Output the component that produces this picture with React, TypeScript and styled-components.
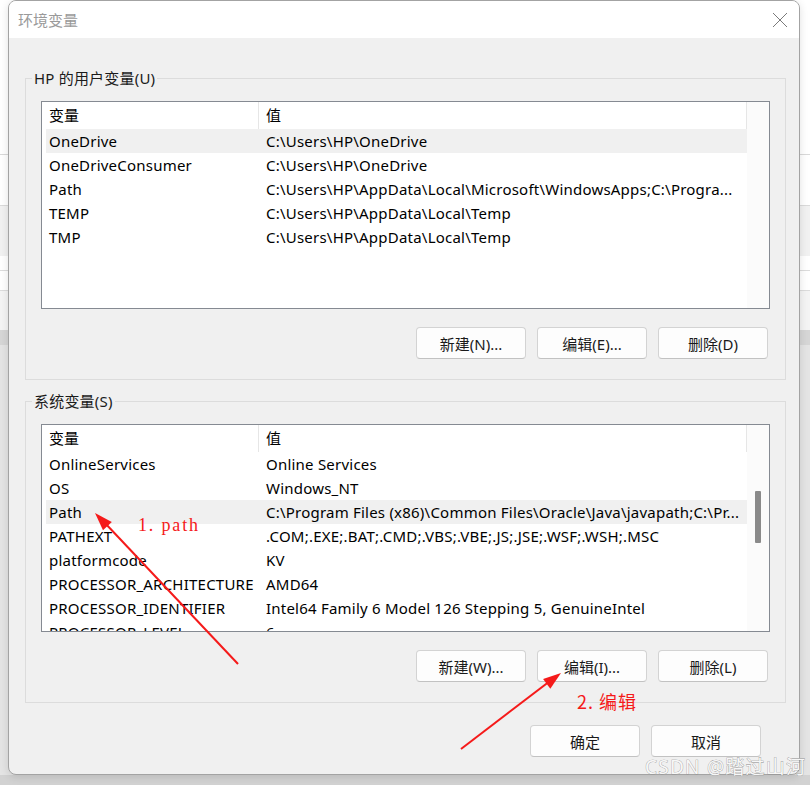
import React from "react";
import styled, { createGlobalStyle } from "styled-components";

type Row = { name: string; value: string; selected?: boolean };

const userVars: Row[] = [
  { name: "OneDrive", value: "C:\\Users\\HP\\OneDrive", selected: true },
  { name: "OneDriveConsumer", value: "C:\\Users\\HP\\OneDrive" },
  { name: "Path", value: "C:\\Users\\HP\\AppData\\Local\\Microsoft\\WindowsApps;C:\\Progra..." },
  { name: "TEMP", value: "C:\\Users\\HP\\AppData\\Local\\Temp" },
  { name: "TMP", value: "C:\\Users\\HP\\AppData\\Local\\Temp" },
];

const systemVars: Row[] = [
  { name: "OnlineServices", value: "Online Services" },
  { name: "OS", value: "Windows_NT" },
  { name: "Path", value: "C:\\Program Files (x86)\\Common Files\\Oracle\\Java\\javapath;C:\\Pr...", selected: true },
  { name: "PATHEXT", value: ".COM;.EXE;.BAT;.CMD;.VBS;.VBE;.JS;.JSE;.WSF;.WSH;.MSC" },
  { name: "platformcode", value: "KV" },
  { name: "PROCESSOR_ARCHITECTURE", value: "AMD64" },
  { name: "PROCESSOR_IDENTIFIER", value: "Intel64 Family 6 Model 126 Stepping 5, GenuineIntel" },
  { name: "PROCESSOR_LEVEL", value: "6" },
];

export default function App() {
  return (
    <Page>
      <GlobalStyle />
      <Dialog>
        <TitleBar>
          <Title>环境变量</Title>
          <CloseButton aria-label="关闭">
            <svg width="16" height="16" viewBox="0 0 16 16">
              <path d="M1 1 L15 15 M15 1 L1 15" stroke="#7a7a7a" strokeWidth="1" fill="none" />
            </svg>
          </CloseButton>
        </TitleBar>
        <Body>
          <Group>
            <Legend>HP 的用户变量(U)</Legend>
            <VarTable rows={userVars} />
            <ButtonRow>
              <Button>新建(N)...</Button>
              <Button>编辑(E)...</Button>
              <Button>删除(D)</Button>
            </ButtonRow>
          </Group>
          <Group $spaced>
            <Legend>系统变量(S)</Legend>
            <VarTable rows={systemVars} thumbTop={66} />
            <ButtonRow>
              <Button>新建(W)...</Button>
              <Button>编辑(I)...</Button>
              <Button>删除(L)</Button>
            </ButtonRow>
          </Group>
          <Footer>
            <Button>确定</Button>
            <Button>取消</Button>
          </Footer>
        </Body>
      </Dialog>
      <Annotations width="810" height="785" viewBox="0 0 810 785">
        <g stroke="#f51a1a" strokeWidth="2" fill="none">
          <line x1="238" y1="664" x2="104" y2="522" />
          <line x1="461" y1="749" x2="550" y2="681" />
        </g>
        <g fill="#f51a1a">
          <polygon points="95,513 111.8,522 103,530.2" />
          <polygon points="561,673 550.3,688.7 543.1,679.1" />
        </g>
        <NoteText x="138" y="531" textLength="60" $serif>
          1. path
        </NoteText>
        <NoteText x="577" y="709" textLength="59">
          2. 编辑
        </NoteText>
        <Watermark x="645" y="774" textLength="160">
          CSDN @踏过山河
        </Watermark>
      </Annotations>
    </Page>
  );
}

function VarTable({ rows, thumbTop }: { rows: Row[]; thumbTop?: number }) {
  return (
    <Table>
      <List>
        <HeaderRow>
          <HeaderCell>变量</HeaderCell>
          <HeaderCell $value>值</HeaderCell>
        </HeaderRow>
        {rows.map((r) => (
          <DataRow key={r.name} $selected={r.selected}>
            <Cell>{r.name}</Cell>
            <Cell $value>{r.value}</Cell>
          </DataRow>
        ))}
      </List>
      <Gutter>{thumbTop !== undefined && <Thumb $top={thumbTop} />}</Gutter>
    </Table>
  );
}

const GlobalStyle = createGlobalStyle`
  html, body {
    margin: 0;
    padding: 0;
  }
  body {
    width: 810px;
    height: 785px;
    overflow: hidden;
    font-family: "Noto Sans", "Noto Sans CJK SC", sans-serif;
    background: linear-gradient(
      to bottom,
      #ffffff 0 154px,
      #d9d9d9 154px 155px,
      #ffffff 155px 205px,
      #dadada 205px 206px,
      #f1f1f1 206px 256px,
      #ffffff 256px 270px,
      #dcdcdc 270px 271px,
      #ffffff 271px 290px,
      #dcdcdc 290px 291px,
      #f4f4f4 291px 330px,
      #d6d6d6 330px 345px,
      #e4e4e4 345px 775px,
      #d2d2d2 775px
    );
  }
`;

const Page = styled.div`
  position: relative;
  width: 810px;
  height: 785px;
  box-sizing: border-box;
  padding: 0 10px 0 8px;
`;

const Dialog = styled.div`
  width: 792px;
  height: 775px;
  box-sizing: border-box;
  display: flex;
  flex-direction: column;
  background: #f0f0f0;
  border: 1px solid #a3a3a3;
  border-radius: 8px;
  overflow: hidden;
  box-shadow: 0 2px 8px rgba(0, 0, 0, 0.12);
`;

const TitleBar = styled.div`
  height: 37px;
  flex: none;
  display: flex;
  align-items: center;
  justify-content: space-between;
  padding: 0 11px 0 9px;
  background: #ffffff;
`;

const Title = styled.span`
  font-size: 15px;
  color: #9a9a9a;
`;

const CloseButton = styled.span`
  display: flex;
  width: 16px;
  height: 16px;
`;

const Body = styled.div`
  display: flex;
  flex-direction: column;
  padding: 30px 13px 0 16px;
`;

const Group = styled.fieldset<{ $spaced?: boolean }>`
  margin: ${(p) => (p.$spaced ? "11px" : "0")} 0 0 0;
  padding: 13px 15px 20px;
  border: 1px solid #dcdcdc;
  min-width: 0;
`;

const Legend = styled.legend`
  margin-left: -9px;
  padding: 0 2px;
  height: 20px;
  line-height: 20px;
  font-size: 15px;
  color: #1b1b1b;
  letter-spacing: 0.2px;
`;

const Table = styled.div`
  display: flex;
  height: 208px;
  box-sizing: border-box;
  border: 1px solid #858a92;
  background: #ffffff;
  padding-left: 4px;
  overflow: hidden;
`;

const List = styled.div`
  flex: 1;
  min-width: 0;
`;

const HeaderRow = styled.div`
  display: grid;
  grid-template-columns: 213px 1fr;
  height: 27px;
`;

const HeaderCell = styled.div<{ $value?: boolean }>`
  padding-left: ${(p) => (p.$value ? "7px" : "3px")};
  line-height: 27px;
  font-size: 15px;
  color: #000;
  border-right: 1px solid #e6e6e6;
`;

const DataRow = styled.div<{ $selected?: boolean }>`
  display: grid;
  grid-template-columns: 213px 1fr;
  height: 24px;
  background: ${(p) => (p.$selected ? "#f0f0f0" : "transparent")};
`;

const Cell = styled.div<{ $value?: boolean }>`
  padding-left: ${(p) => (p.$value ? "7px" : "3px")};
  line-height: 24px;
  font-size: 15px;
  letter-spacing: 0.22px;
  color: #000;
  white-space: nowrap;
  overflow: hidden;
`;

const Gutter = styled.div`
  width: 22px;
  flex: none;
  background: #fbfbfb;
`;

const Thumb = styled.div<{ $top: number }>`
  width: 6px;
  height: 52px;
  margin: ${(p) => p.$top}px 0 0 8px;
  background: #8a8a8a;
  border-radius: 1px;
`;

const ButtonRow = styled.div`
  display: flex;
  justify-content: flex-end;
  gap: 11px;
  margin-top: 18px;
  padding-right: 2px;
`;

const Button = styled.button`
  width: 110px;
  height: 32px;
  padding: 0;
  font-family: "Noto Sans", "Noto Sans CJK SC", sans-serif;
  font-size: 15px;
  color: #1a1a1a;
  background: #fdfdfd;
  border: 1px solid #d3d3d3;
  border-bottom-color: #c2c2c2;
  border-radius: 4px;
`;

const Footer = styled.div`
  display: flex;
  justify-content: flex-end;
  gap: 11px;
  margin-top: 22px;
  padding-right: 25px;
`;

const Annotations = styled.svg`
  position: absolute;
  left: 0;
  top: 0;
  pointer-events: none;
`;

const NoteText = styled.text<{ $serif?: boolean }>`
  font-family: ${(p) =>
    p.$serif
      ? `"Liberation Serif", "Noto Sans CJK SC", serif`
      : `"Noto Sans CJK SC", sans-serif`};
  font-size: 18px;
  fill: #f51a1a;
`;

const Watermark = styled.text`
  font-family: "Noto Sans", "Noto Sans CJK SC", sans-serif;
  font-size: 19px;
  fill: #f7f7f7;
  stroke: #8a8a8a;
  stroke-width: 0.6px;
  paint-order: stroke;
`;
